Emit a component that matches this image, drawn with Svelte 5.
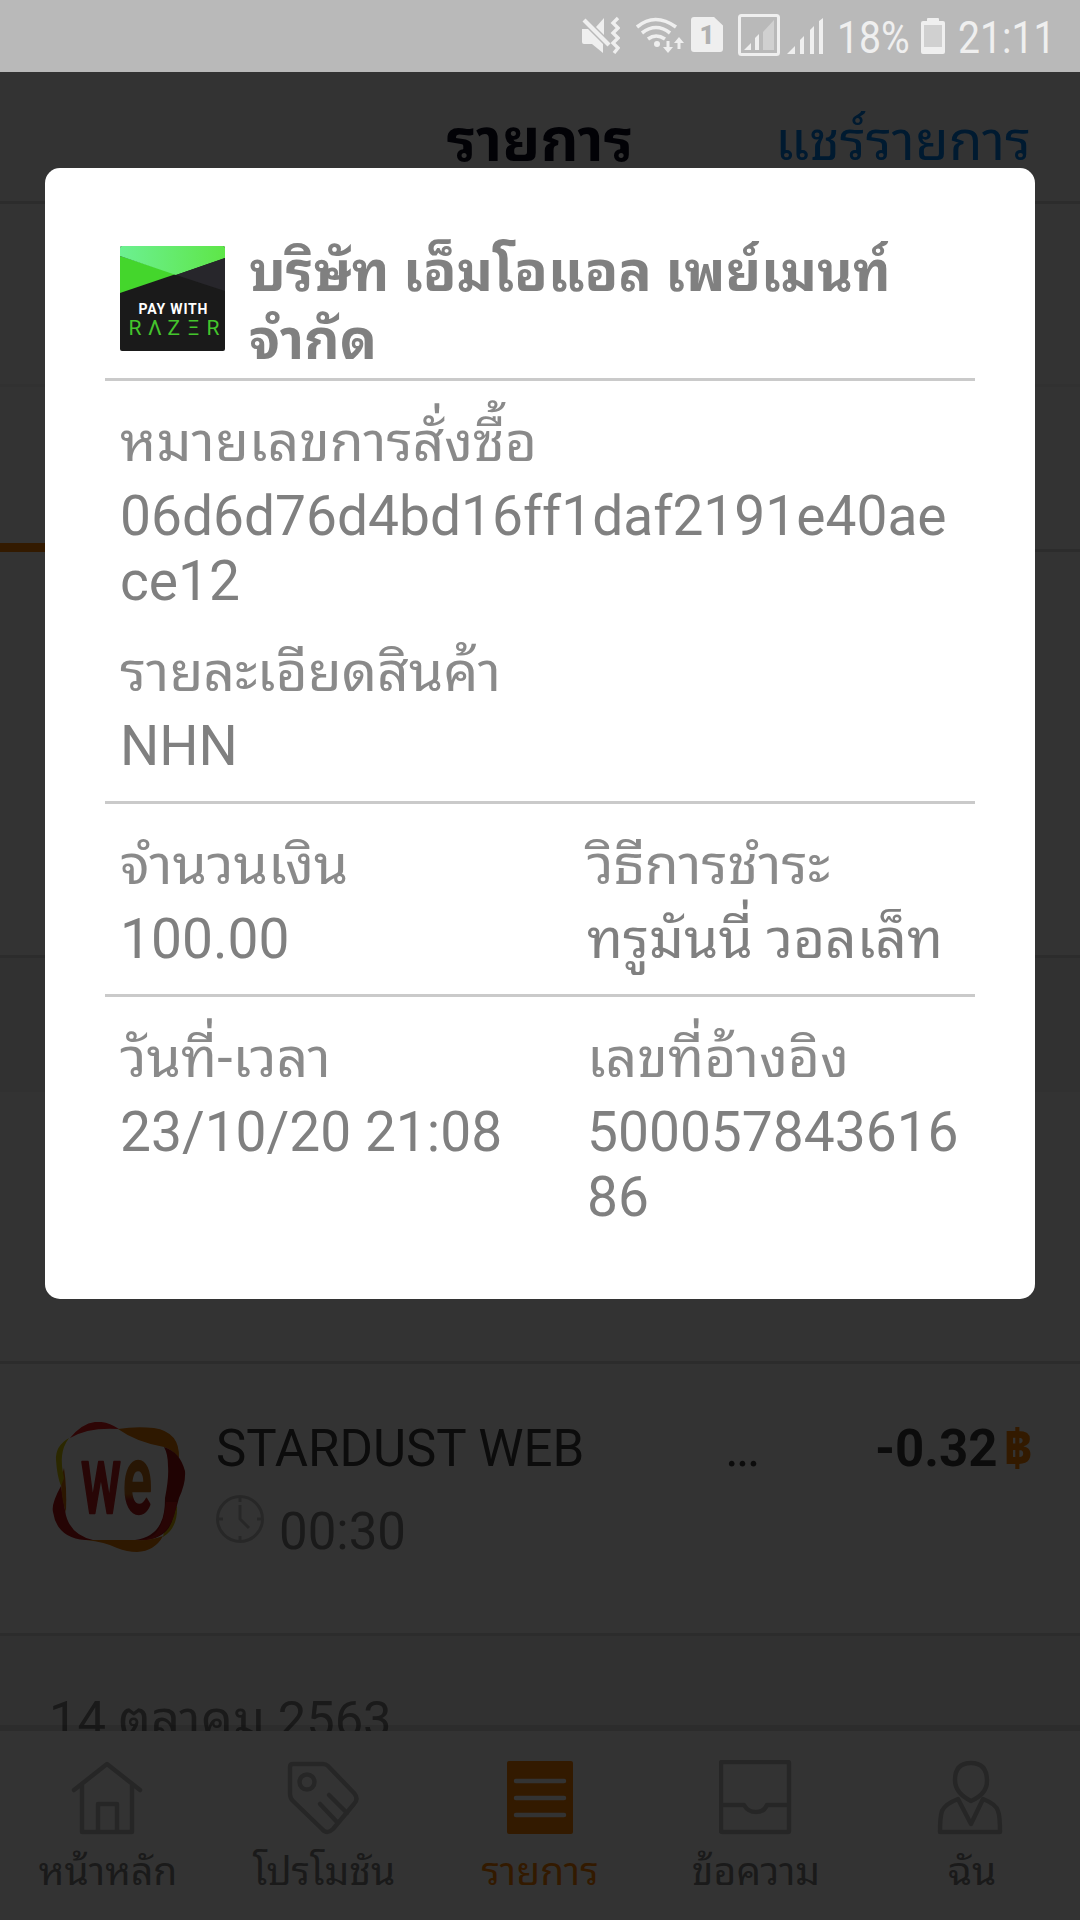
<script lang="ts">
    interface Tab {
        id: string;
        label: string;
    }

    const tabs: Tab[] = [
        {id: 'home', label: 'หน้าหลัก'},
        {id: 'promo', label: 'โปรโมชัน'},
        {id: 'list', label: 'รายการ'},
        {id: 'inbox', label: 'ข้อความ'},
        {id: 'me', label: 'ฉัน'}
    ];
    const activeTab = 'list';
</script>

<div class="screen">
    <div class="status">
        <svg width="40" height="40" viewBox="0 0 40 40" fill="none" stroke="#efefef" stroke-width="3.4">
            <path d="M2 13h6l15 15v9l-11-9H4q-2 0-2-2z" fill="#efefef" stroke="none"/>
            <path d="M24 2v17l-8-8z" fill="#efefef" stroke="none"/>
            <path d="M4 4l25 25" stroke-width="4.2"/>
            <path d="M38 2l-5 5 5 5-5 5 5 5-5 5 5 5-4 5"/>
        </svg>
        <svg class="wifi" width="50" height="40" viewBox="0 0 50 40" fill="none" stroke="#efefef" stroke-width="3.6">
            <path d="M2 11q18-15 39 0M7 17q14-11 28 0M13 23q8-6 17 0"/>
            <circle cx="22" cy="28" r="3" fill="#efefef" stroke="none"/>
            <path d="M33 25v9M44 33v-9" stroke-width="3"/>
            <path d="M28 31h10l-5 6zM39 27h10l-5-6z" fill="#efefef" stroke="none"/>
        </svg>
        <div class="sim">1</div>
        <svg class="roam" width="42" height="42" viewBox="0 0 42 42">
            <rect x="1.5" y="1.5" width="39" height="39" rx="2" fill="none" stroke="#efefef" stroke-width="3"/>
            <path d="M25 18L36 6v30H25z" fill="#d0d0d0"/>
            <path d="M6 36l7-7v7zM17 24l4-4v16h-4z" fill="#efefef"/>
        </svg>
        <svg class="signal" width="36" height="37" viewBox="0 0 36 37" fill="#efefef">
            <path d="M0 36l8-8v8zM13 22l4-4v18h-4zM23 12l4-4v28h-4zM32 3l4-3v36h-4z"/>
        </svg>
        <span class="percent">18%</span>
        <svg class="battery" width="24" height="36" viewBox="0 0 24 36">
            <path d="M2 3h4V1q0-1 1-1h10q1 0 1 1v2h4q2 0 2 2v29q0 2-2 2H2q-2 0-2-2V5q0-2 2-2z" fill="#efefef"/>
            <path d="M3 7h18v22H3z" fill="#d0d0d0"/>
        </svg>
        <span class="time">21:11</span>
    </div>

    <header>
        <h1>รายการ</h1>
        <span class="share">แชร์รายการ</span>
    </header>
    <div class="summary"></div>
    <div class="filters"><i></i></div>
    <div class="entry"></div>
    <div class="day"></div>
    <div class="entry under"></div>

    <div class="transaction">
        <svg class="we" width="134" height="134" viewBox="0 0 134 134">
            <path d="M18 16Q40-11 67 7 36 5 18 16z" fill="#e61e1e"/>
            <path d="M66 7q18-3 36-1 26 4 25 30-6-8-15-11Q84 20 66 7z" fill="#e67800"/>
            <path d="M125 84q1 22-14 31l4-22z" fill="#dcb400"/>
            <path d="M112 25q16 5 21 24 1 12-6 27-2 8-6 20-6 24-38 22 20-3 26-18 4-8 4-24 4-20 3-32 0-12-4-19z" fill="#a01212"/>
            <path d="M114 80q-2 24-12 33-8 6-22 5 32 4 42-24l3-14z" fill="#c81c1c"/>
            <path d="M34 118h50q14 1 27-4-8 15-26 16-10 0-20-4-12-6-31-8z" fill="#e67800"/>
            <path d="M9 64Q-1 82 1 90q4 26 32 28l8 0Q16 112 13 88z" fill="#b91616"/>
            <path d="M9 62q1-10 3-16 3 20 2 44-4-10-5-28z" fill="#dc6e00"/>
            <path d="M17 16Q3 24 4 38q1 16 5 26l3-8q-3-14-2-22 1-10 7-18z" fill="#d7c800"/>
            <g font-size="60" font-weight="500" stroke-linejoin="round">
                <text transform="translate(29 91) scale(0.9 1.6)" fill="#c82020" stroke="#c82020" stroke-width="1.5">w</text>
                <text transform="translate(71 91) scale(0.9 1.6)" fill="url(#ember)" stroke="url(#ember)" stroke-width="1.5">e</text>
            </g>
            <defs>
                <linearGradient id="ember" x2="0" y2="1"><stop offset="0.62" stop-color="#c86e14"/><stop offset="0.68" stop-color="#b41a1a"/></linearGradient>
            </defs>
        </svg>
        <div class="what">
            <div class="name"><span>STARDUST WEB</span><span class="dots">...</span></div>
            <div class="when">
                <svg width="48" height="48" viewBox="0 0 48 48" fill="none" stroke="#c3c3c3" stroke-width="3">
                    <circle cx="24" cy="24" r="22.5"/>
                    <path d="M24 10v14l9 9M24 1v6M24 41v6M1 24h6M41 24h6"/>
                </svg>
                <span>00:30</span>
            </div>
        </div>
        <div class="amount">-0.32<b>฿</b></div>
    </div>

    <div class="day next">14 ตุลาคม 2563</div>

    <nav>
        {#each tabs as tab}
            <div class="tab" class:active={tab.id === activeTab}>
                <svg width="74" height="76" viewBox="0 0 74 76" fill="none" stroke="#bebebe" stroke-width="4.5" stroke-linecap="round" stroke-linejoin="round">
                    {#if tab.id === 'home'}
                        <path d="M3 30L36 4l33 26M11 25v47h50V25M27 71V44h19v27"/>
                    {:else if tab.id === 'promo'}
                        <path d="M3 7q0-3 3-3h30q3 0 5 2l26 27q5 6 0 11L46 69q-6 6-11 0L6 41q-3-3-3-7z"/>
                        <circle cx="20" cy="22" r="7.5"/>
                        <path d="M42 35l18 18M33 44l17 18"/>
                    {:else if tab.id === 'list'}
                        <rect x="4" y="1" width="66" height="73" rx="2" fill="#ff8200" stroke="none"/>
                        <path d="M13 21h48M13 38h48M13 55h48" stroke="#fff"/>
                    {:else if tab.id === 'inbox'}
                        <rect x="2" y="2" width="68" height="70" rx="1"/>
                        <path d="M3 45h22q4 7 12 7t11-7h21"/>
                    {:else}
                        <path d="M36 3q16 0 16 18 0 13-16 20-16-8-16-21Q20 3 36 3z"/>
                        <path d="M23 39q-13 5-16 12-2 6-2 21h60q0-16-2-21-2-7-15-12L36 64z"/>
                    {/if}
                </svg>
                <span>{tab.label}</span>
            </div>
        {/each}
    </nav>

    <div class="overlay">
        <div class="receipt">
            <div class="merchant">
                <svg width="105" height="105" viewBox="0 0 105 105">
                    <rect width="105" height="105" rx="2" fill="#1a1a1a"/>
                    <path d="M0 10L56 28 0 47z" fill="#44d62c"/>
                    <path d="M0 2q0-2 2-2h101q2 0 2 2v10L56 29 0 10z" fill="url(#shine)"/>
                    <path d="M56 29l49-17v33z" fill="#27262b"/>
                    <text x="53" y="67.5" fill="#fff" font-size="14" font-weight="700" text-anchor="middle" textLength="69" lengthAdjust="spacing">PAY WITH</text>
                    <text y="89" x="8.500 28 47.500 67.500 86.500" fill="#44c52c" font-size="21">RΛZΞR</text>
                    <defs>
                        <linearGradient id="shine"><stop stop-color="#6cf091"/><stop offset="1" stop-color="#5ee648"/></linearGradient>
                    </defs>
                </svg>
                <h2>บริษัท เอ็มโอแอล เพย์เมนท์ จำกัด</h2>
            </div>
            <div class="block order">
                <dl>
                    <dt>หมายเลขการสั่งซื้อ</dt>
                    <dd>06d6d76d4bd16ff1daf2191e40aece12</dd>
                </dl>
                <dl>
                    <dt>รายละเอียดสินค้า</dt>
                    <dd>NHN</dd>
                </dl>
            </div>
            <div class="block split">
                <dl>
                    <dt>จำนวนเงิน</dt>
                    <dd>100.00</dd>
                </dl>
                <dl>
                    <dt>วิธีการชำระ</dt>
                    <dd>ทรูมันนี่ วอลเล็ท</dd>
                </dl>
            </div>
            <div class="block split">
                <dl>
                    <dt>วันที่-เวลา</dt>
                    <dd>23/10/20 21:08</dd>
                </dl>
                <dl>
                    <dt>เลขที่อ้างอิง</dt>
                    <dd>50005784361686</dd>
                </dl>
            </div>
        </div>
    </div>
</div>

<style>
    .screen {
        position: relative;
        display: flex;
        flex-direction: column;
        box-sizing: border-box;
        width: 1080px;
        height: 1920px;
        overflow: hidden;
        background: #fff;
        font-family: Roboto, "Droid Sans Thai", "Noto Sans Thai Looped", Loma, Waree, Garuda, "Noto Sans", sans-serif;
    }

    .screen > * {
        box-sizing: border-box;
        flex-shrink: 0;
    }

    .status {
        display: flex;
        align-items: center;
        height: 72px;
        padding-left: 580px;
        background: #b9b9b9;
        color: #efefef;
        font-size: 45px;
    }

    .status span {
        transform: scaleX(0.87);
        transform-origin: left;
    }

    .wifi {
        margin-left: 15px;
    }

    .sim {
        width: 32px;
        height: 35px;
        margin: 0 0 3px 6px;
        border-radius: 3px;
        background: #efefef;
        clip-path: polygon(0 0, 72% 0, 100% 24%, 100% 100%, 0 100%);
        color: #b0b0b0;
        font-size: 26px;
        font-weight: 900;
        line-height: 37px;
        text-align: center;
    }

    .roam {
        margin: 0 0 2px 15px;
    }

    .signal {
        margin-left: 7px;
    }

    .percent {
        width: 70px;
        margin: 2px 0 0 14px;
    }

    .battery {
        margin-left: 14px;
    }

    .time {
        margin: 2px 0 0 13px;
    }

    header {
        display: grid;
        grid-template-columns: 1fr auto 1fr;
        align-items: center;
        height: 132px;
        padding: 8px 49px 0;
        border-bottom: 3px solid #dadada;
    }

    h1 {
        grid-column: 2;
        margin: 0;
        color: #0a0a1e;
        font-size: 59px;
        font-weight: 700;
        line-height: 60px;
    }

    .share {
        justify-self: end;
        color: #0080f0;
        font-size: 55px;
        line-height: 60px;
    }

    .summary {
        height: 180px;
    }

    .filters {
        display: flex;
        align-items: flex-end;
        height: 168px;
        border-top: 3px solid #f5f5f5;
        border-bottom: 3px solid #dadada;
    }

    .filters i {
        width: 216px;
        height: 9px;
        margin-bottom: -3px;
        background: #ff8200;
    }

    .entry {
        height: 406px;
        border-bottom: 3px solid #dadada;
    }

    .entry.under {
        height: 272px;
    }

    .day {
        height: 134px;
        background: #f5f5f5;
    }

    .transaction {
        display: flex;
        height: 272px;
        padding: 55px 47px 0 52px;
        border-bottom: 3px solid #dadada;
    }

    .we {
        margin-top: 3px;
    }

    .what {
        flex: 1;
        margin-left: 30px;
    }

    .name {
        display: flex;
        justify-content: space-between;
        width: 542px;
        color: #3c3c3c;
        font-size: 51px;
        line-height: 60px;
    }

    .dots {
        letter-spacing: -2.5px;
    }

    .when {
        display: flex;
        gap: 15px;
        margin-top: 16px;
        color: #828282;
        font-size: 51px;
        line-height: 74px;
    }

    .amount {
        color: #3c3c3c;
        font-size: 51px;
        font-weight: 700;
        line-height: 60px;
    }

    .amount b {
        margin-left: 6px;
        color: #ff8200;
    }

    .day.next {
        height: 95px;
        padding: 46px 49px 0;
        overflow: hidden;
        color: #828282;
        font-size: 50.7px;
        line-height: 76px;
    }

    nav {
        display: flex;
        height: 195px;
        margin-top: -6px;
        border-top: 6px solid rgba(0, 0, 0, 0.1);
        background: #fff padding-box;
    }

    .tab {
        display: flex;
        flex: 1;
        flex-direction: column;
        align-items: center;
        padding-top: 29px;
        color: #828282;
        font-size: 39px;
    }

    .tab span {
        margin-top: 11px;
        line-height: 50px;
        white-space: nowrap;
    }

    .tab.active {
        color: #ff8200;
    }

    .overlay {
        position: absolute;
        inset: 72px 0 0;
        padding: 96px 45px 0;
        background: rgba(0, 0, 0, 0.8);
    }

    .receipt {
        box-sizing: border-box;
        height: 1131px;
        padding: 60px;
        border-radius: 15px;
        background: #fff;
        color: #808080;
    }

    .merchant {
        display: flex;
        box-sizing: border-box;
        height: 150px;
        padding: 18px 15px 0;
    }

    h2 {
        flex: 1;
        margin: -8px 0 0 24px;
        font-size: 55px;
        font-weight: 700;
        line-height: 68px;
    }

    .block {
        box-sizing: border-box;
        width: 870px;
        height: 193px;
        padding: 24px 15px 0;
        border-top: 3px solid #cacaca;
    }

    .order {
        height: 423px;
    }

    .order dl + dl {
        margin-top: 22px;
    }

    .split {
        display: flex;
    }

    .split dl {
        flex-shrink: 0;
        width: 467px;
    }

    .split dl + dl {
        width: 376px;
    }

    dl,
    dt,
    dd {
        margin: 0;
    }

    dt {
        color: #8a8a8a;
        font-size: 55.3px;
        line-height: 76px;
    }

    dd {
        padding-top: 3px;
        font-size: 55.1px;
        line-height: 64.5px;
        word-break: break-all;
    }
</style>
